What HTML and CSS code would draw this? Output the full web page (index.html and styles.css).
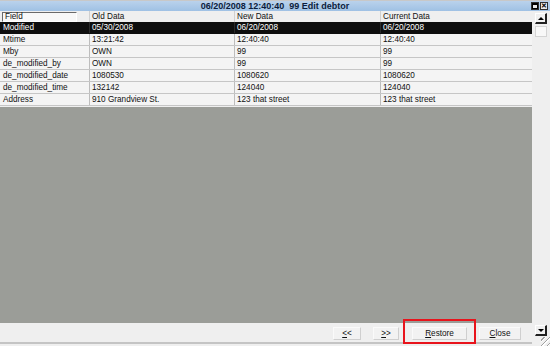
FILE: index.html
```html
<!DOCTYPE html>
<html lang="en">
  <head>
    <meta charset="UTF-8" />
    <title>Edit debtor</title>
    <link rel="stylesheet" href="styles.css">
  </head>
  <body>
    <div class="window">

      <div class="titlebar">
        <div></div>
        <div class="title">06/20/2008 12:40:40&nbsp;&nbsp;99 Edit debtor</div>
        <div class="tb-btns">
          <span class="tb-btn"><span class="maxbox"></span></span>
          <span class="tb-btn cross">&#x2715;</span>
        </div>
      </div>

      <div class="body">
        <div class="main">

          <div class="grid">
            <div class="row head">
              <div class="cell"><span class="fieldbox">Field</span></div>
              <div class="cell">Old Data</div>
              <div class="cell">New Data</div>
              <div class="cell">Current Data</div>
            </div>
            <div class="row sel">
              <div class="cell">Modified</div>
              <div class="cell">05/30/2008</div>
              <div class="cell">06/20/2008</div>
              <div class="cell">06/20/2008</div>
            </div>
            <div class="row">
              <div class="cell">Mtime</div>
              <div class="cell">13:21:42</div>
              <div class="cell">12:40:40</div>
              <div class="cell">12:40:40</div>
            </div>
            <div class="row">
              <div class="cell">Mby</div>
              <div class="cell">OWN</div>
              <div class="cell">99</div>
              <div class="cell">99</div>
            </div>
            <div class="row">
              <div class="cell">de_modified_by</div>
              <div class="cell">OWN</div>
              <div class="cell">99</div>
              <div class="cell">99</div>
            </div>
            <div class="row">
              <div class="cell">de_modified_date</div>
              <div class="cell">1080530</div>
              <div class="cell">1080620</div>
              <div class="cell">1080620</div>
            </div>
            <div class="row">
              <div class="cell">de_modified_time</div>
              <div class="cell">132142</div>
              <div class="cell">124040</div>
              <div class="cell">124040</div>
            </div>
            <div class="row">
              <div class="cell">Address</div>
              <div class="cell">910 Grandview St.</div>
              <div class="cell">123 that street</div>
              <div class="cell">123 that street</div>
            </div>
          </div>

          <div class="empty"></div>

          <div class="footer">
            <button class="btn w-prev"><u>&lt;</u>&lt;</button>
            <button class="btn w-next"><u>&gt;</u>&gt;</button>
            <button class="btn w-restore marked"><u>R</u>estore</button>
            <button class="btn w-close"><u>C</u>lose</button>
          </div>
        </div>

        <div class="vscroll">
          <div class="sbtn up"><span class="tri-up"></span></div>
          <div class="thumb"></div>
          <div class="track"></div>
          <div class="sbtn down"><span class="tri-down"></span></div>
          <div class="grip"></div>
        </div>
      </div>

    </div>
  </body>
</html>
```

FILE: styles.css
```css
body {
  margin: 0;
  font-family: "Liberation Sans", Arial, sans-serif;
  font-size: 8.2px;
  color: #111;
  background: #efefef;
}

.window {
  display: flex;
  flex-direction: column;
  height: 346px;
  width: 550px;
  background: #efefef;
}

/* title bar */
.titlebar {
  display: grid;
  grid-template-columns: 1fr auto 1fr;
  align-items: center;
  height: 10px;
  border-top: 1px solid #c8c8c8;
  background: linear-gradient(#bad2ec, #9fc1e4);
}
.title {
  font-weight: bold;
  font-size: 9px;
  color: #0c1c3c;
  line-height: 10px;
}
.tb-btns {
  display: flex;
  justify-content: flex-end;
  gap: 1px;
  padding-right: 2px;
}
.tb-btn {
  width: 8px;
  height: 8px;
  box-sizing: border-box;
  border: 1px solid #303030;
  background: #e8e8e8;
  display: flex;
  align-items: center;
  justify-content: center;
}
.maxbox {
  width: 4px;
  height: 3px;
  border: 1px solid #000;
  border-top-width: 2px;
}
.cross {
  font-size: 7px;
  font-weight: bold;
  line-height: 6px;
  color: #000;
}

/* body */
.body {
  flex: 1;
  display: flex;
}
.main {
  flex: 1;
  display: flex;
  flex-direction: column;
}

.row {
  display: grid;
  grid-template-columns: 89px 145px 146px 1fr;
  height: 12px;
  box-sizing: border-box;
  border-bottom: 1px solid #c6c6c6;
  background: #f4f4f4;
}
.row.head {
  height: 11px;
  border-bottom: none;
  background: #efefef;
}
.cell {
  padding-left: 3px;
  line-height: 11px;
  white-space: nowrap;
  overflow: hidden;
}
.cell + .cell {
  border-left: 1px solid #bdbdbd;
  padding-left: 2px;
}
.head .cell + .cell {
  border-left-color: #d0d0d0;
}
.fieldbox {
  display: block;
  margin-top: 1px;
  margin-left: -1px;
  width: 75px;
  height: 10px;
  box-sizing: border-box;
  line-height: 8px;
  padding-left: 2px;
  border: 1px solid #fff;
  border-top-color: #6a6a6a;
  border-left-color: #6a6a6a;
  background: #f8f8f8;
}
.row.sel {
  background: #0e0e0e;
  color: #fff;
  border-bottom-color: #0e0e0e;
}
.sel .cell + .cell {
  border-left-color: #2a2a2a;
}

.empty {
  flex: 1;
  background: #9b9d98;
  margin-top: 1px;
}

/* footer buttons */
.footer {
  height: 21px;
  box-sizing: border-box;
  display: flex;
  justify-content: flex-end;
  gap: 12px;
  padding: 4px 11px 0 0;
  border-bottom: 2px solid #c4c4c4;
  margin-bottom: 2px;
}
.btn {
  height: 13px;
  padding: 0;
  font-family: "Liberation Sans", Arial, sans-serif;
  font-size: 8.2px;
  color: #111;
  background: #f2f2f2;
  border: 1px solid #fafafa;
  border-right-color: #cfcfcf;
  border-bottom-color: #cfcfcf;
  line-height: 11px;
}
.w-prev { width: 28px; }
.w-next { width: 26px; margin-right: 1px; }
.w-restore { width: 55px; }
.w-close { width: 42px; }

.marked {
  position: relative;
}
.marked::after {
  content: "";
  position: absolute;
  left: -10px;
  top: -9px;
  width: 69px;
  height: 21px;
  border: 2px solid #e8141c;
}

/* vertical scroll bar */
.vscroll {
  width: 18px;
  display: flex;
  flex-direction: column;
  align-items: center;
  padding-top: 2px;
  box-sizing: border-box;
}
.sbtn {
  width: 12px;
  height: 11px;
  box-sizing: border-box;
  background: #f0f0f0;
  border: 1px solid #fff;
  border-right: 2px solid #202020;
  border-bottom: 2px solid #202020;
  display: flex;
  align-items: center;
  justify-content: center;
}
.thumb {
  margin-top: 2px;
  width: 12px;
  height: 11px;
  box-sizing: border-box;
  background: #f8f8f8;
  border: 1px solid #d4d4d4;
}
.track {
  flex: 1;
}
.tri-up {
  border-left: 3px solid transparent;
  border-right: 3px solid transparent;
  border-bottom: 3px solid #000;
}
.tri-down {
  border-left: 3px solid transparent;
  border-right: 3px solid transparent;
  border-top: 3px solid #000;
}
.sbtn.down {
  margin-bottom: 1px;
}
.grip {
  align-self: flex-end;
  width: 9px;
  height: 9px;
  background: repeating-linear-gradient(135deg, transparent 0 2px, #a0a0a0 2px 3px, #fff 3px 4px);
}
```
